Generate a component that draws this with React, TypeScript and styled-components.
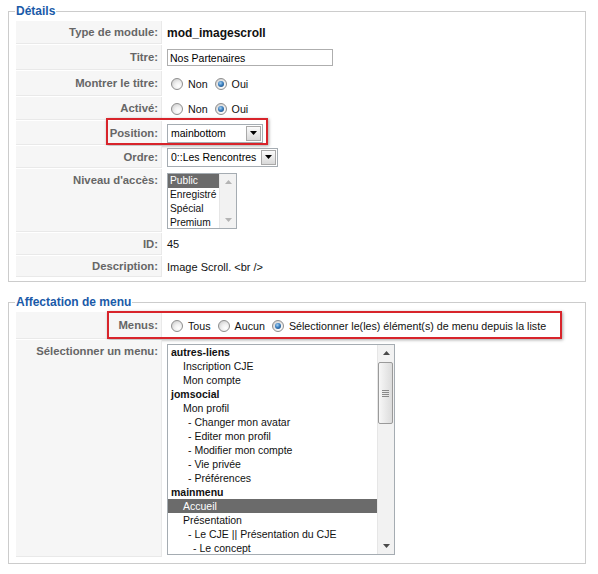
import styled, { createGlobalStyle } from "styled-components"

const GlobalStyle = createGlobalStyle`
  body {
    margin: 0;
    background: #fff;
    font-family: "Liberation Sans", Arial, sans-serif;
    color: #000;
  }
`

const menuItems: { label: string; indent: number; group?: boolean; selected?: boolean }[] = [
    { label: "autres-liens", indent: 3, group: true },
    { label: "Inscription CJE", indent: 15 },
    { label: "Mon compte", indent: 15 },
    { label: "jomsocial", indent: 3, group: true },
    { label: "Mon profil", indent: 15 },
    { label: "- Changer mon avatar", indent: 20 },
    { label: "- Editer mon profil", indent: 20 },
    { label: "- Modifier mon compte", indent: 20 },
    { label: "- Vie privée", indent: 20 },
    { label: "- Préférences", indent: 20 },
    { label: "mainmenu", indent: 3, group: true },
    { label: "Accueil", indent: 15, selected: true },
    { label: "Présentation", indent: 15 },
    { label: "- Le CJE || Présentation du CJE", indent: 20 },
    { label: "- Le concept", indent: 25 },
]

const accessLevels = ["Public", "Enregistré", "Spécial", "Premium"]

const Arrow = ({ up, color = "#000" }: { up?: boolean; color?: string }) => (
    <svg width="7" height="4" viewBox="0 0 7 4">
        <polygon points={up ? "0,4 7,4 3.5,0" : "0,0 7,0 3.5,4"} fill={color} />
    </svg>
)

const App = () => {
    return (
        <Page>
            <GlobalStyle />
            <Fieldset $bottom={3}>
                <Legend>Détails</Legend>
                <AdminTable>
                    <tbody>
                        <tr>
                            <KeyCell $h={23}>Type de module:</KeyCell>
                            <ValueCell><Strong>mod_imagescroll</Strong></ValueCell>
                        </tr>
                        <tr>
                            <KeyCell $h={25}>Titre:</KeyCell>
                            <ValueCell><TextInput readOnly defaultValue="Nos Partenaires" /></ValueCell>
                        </tr>
                        <tr>
                            <KeyCell $h={25}>Montrer le titre:</KeyCell>
                            <ValueCell>
                                <RadioGroup>
                                    <Radio /><RadioLabel>Non</RadioLabel>
                                    <Radio $checked /><RadioLabel>Oui</RadioLabel>
                                </RadioGroup>
                            </ValueCell>
                        </tr>
                        <tr>
                            <KeyCell $h={23}>Activé:</KeyCell>
                            <ValueCell>
                                <RadioGroup>
                                    <Radio /><RadioLabel>Non</RadioLabel>
                                    <Radio $checked /><RadioLabel>Oui</RadioLabel>
                                </RadioGroup>
                            </ValueCell>
                        </tr>
                        <tr>
                            <KeyCell $h={24}>
                                <Highlight $left={90} $top={-3} $w={162} $h={27} />
                                Position:
                            </KeyCell>
                            <ValueCell>
                                <Select $w={96}>
                                    <SelectText>mainbottom</SelectText>
                                    <DropButton><Arrow /></DropButton>
                                </Select>
                            </ValueCell>
                        </tr>
                        <tr>
                            <KeyCell $h={22}>Ordre:</KeyCell>
                            <ValueCell>
                                <Select $w={111}>
                                    <SelectText>0::Les Rencontres</SelectText>
                                    <DropButton><Arrow /></DropButton>
                                </Select>
                            </ValueCell>
                        </tr>
                        <tr>
                            <KeyCell $h={63} $top>Niveau d'accès:</KeyCell>
                            <ValueCell $top>
                                <ListBox $w={70} $h={56}>
                                    <ListItems>
                                        {accessLevels.map((level, i) => (
                                            <ListItem key={level} $indent={2} $small $selected={i === 0}>{level}</ListItem>
                                        ))}
                                    </ListItems>
                                    <ScrollBar $w={16}>
                                        <ScrollButton><Arrow up color="#b4b4b4" /></ScrollButton>
                                        <ScrollTrack />
                                        <ScrollButton><Arrow color="#b4b4b4" /></ScrollButton>
                                    </ScrollBar>
                                </ListBox>
                            </ValueCell>
                        </tr>
                        <tr>
                            <KeyCell $h={22}>ID:</KeyCell>
                            <ValueCell>45</ValueCell>
                        </tr>
                        <tr>
                            <KeyCell $h={21}>Description:</KeyCell>
                            <ValueCell>Image Scroll. &lt;br /&gt;</ValueCell>
                        </tr>
                    </tbody>
                </AdminTable>
            </Fieldset>

            <Fieldset $gap={12} $bottom={5}>
                <Legend>Affectation de menu</Legend>
                <AdminTable>
                    <tbody>
                        <tr>
                            <KeyCell $h={27}>
                                <Highlight $left={91} $top={-1} $w={455} $h={28} />
                                Menus:
                            </KeyCell>
                            <ValueCell>
                                <RadioGroup>
                                    <Radio /><RadioLabel>Tous</RadioLabel>
                                    <Radio /><RadioLabel>Aucun</RadioLabel>
                                    <Radio $checked /><RadioLabel>Sélectionner le(les) élément(s) de menu depuis la liste</RadioLabel>
                                </RadioGroup>
                            </ValueCell>
                        </tr>
                        <tr>
                            <KeyCell $h={217} $top>Sélectionner un menu:</KeyCell>
                            <ValueCell $top>
                                <ListBox $w={228} $h={211}>
                                    <ListItems>
                                        {menuItems.map(item => (
                                            <ListItem
                                                key={item.label}
                                                $indent={item.indent}
                                                $group={item.group}
                                                $selected={item.selected}
                                            >
                                                {item.label}
                                            </ListItem>
                                        ))}
                                    </ListItems>
                                    <ScrollBar $w={16}>
                                        <ScrollButton><Arrow up color="#4a4a4a" /></ScrollButton>
                                        <Thumb>
                                            <Grip><i /><i /><i /><i /></Grip>
                                        </Thumb>
                                        <ScrollTrack />
                                        <ScrollButton><Arrow color="#4a4a4a" /></ScrollButton>
                                    </ScrollBar>
                                </ListBox>
                            </ValueCell>
                        </tr>
                    </tbody>
                </AdminTable>
            </Fieldset>
        </Page>
    )
}

const Page = styled.div`
  width: 598px;
  padding-top: 3px;
`;

const Fieldset = styled.fieldset<{ $gap?: number; $bottom: number }>`
  margin: ${p => p.$gap ?? 0}px 12px 0 8px;
  padding: 1px 5px ${p => p.$bottom}px 6px;
  border: 1px solid #cccccc;
  min-width: 0;
`;

const Legend = styled.legend`
  color: #1a5aa8;
  font-size: 12px;
  font-weight: bold;
  line-height: 16px;
  padding: 0 1px;
`;

const AdminTable = styled.table`
  width: 100%;
  border-collapse: separate;
  border-spacing: 1px;
`;

const KeyCell = styled.td<{ $h: number; $top?: boolean }>`
  position: relative;
  box-sizing: border-box;
  width: 146px;
  height: ${p => p.$h}px;
  padding: ${p => (p.$top ? "5px" : "0")} 3px 0 0;
  background: #f6f6f6;
  border-bottom: 1px solid #e9e9e9;
  border-right: 1px solid #e9e9e9;
  text-align: right;
  vertical-align: ${p => (p.$top ? "top" : "middle")};
  color: #666666;
  font-weight: bold;
  font-size: 11.3px;
  white-space: nowrap;
`;

const ValueCell = styled.td<{ $top?: boolean }>`
  padding: ${p => (p.$top ? "4px" : "0")} 0 0 4px;
  vertical-align: ${p => (p.$top ? "top" : "middle")};
  font-size: 11px;
  color: #111;
`;

const Strong = styled.span`
  font-weight: bold;
  font-size: 12px;
  color: #111;
`;

const Highlight = styled.span<{ $left: number; $top: number; $w: number; $h: number }>`
  position: absolute;
  left: ${p => p.$left}px;
  top: ${p => p.$top}px;
  width: ${p => p.$w}px;
  height: ${p => p.$h}px;
  box-sizing: border-box;
  border: 2px solid #d8242b;
  box-shadow: 1px 1px 3px rgba(0, 0, 0, 0.35);
  pointer-events: none;
`;

const TextInput = styled.input`
  display: block;
  box-sizing: border-box;
  width: 166px;
  height: 17px;
  margin: 0;
  padding: 0 2px;
  border: 1px solid #aeaeae;
  font-family: "Liberation Sans", Arial, sans-serif;
  font-size: 10.5px;
  color: #000;
  outline: none;
`;

const RadioGroup = styled.div`
  display: flex;
  align-items: center;
  padding-left: 4px;
`;

const Radio = styled.span<{ $checked?: boolean }>`
  position: relative;
  box-sizing: border-box;
  width: 12px;
  height: 12px;
  border-radius: 50%;
  border: 1px solid #8e8e8e;
  background: radial-gradient(circle at 65% 70%, #ffffff 0%, #f0f0f0 40%, #c4c4c4 100%);
  flex-shrink: 0;
  &::after {
    content: "";
    display: ${p => (p.$checked ? "block" : "none")};
    position: absolute;
    inset: 2px;
    border-radius: 50%;
    background: radial-gradient(circle at 40% 35%, #a6d2f2 0%, #3c7fbf 45%, #163f6a 100%);
  }
`;

const RadioLabel = styled.span`
  font-size: 10.7px;
  margin: 0 7px 0 5px;
  color: #111;
`;

const Select = styled.div<{ $w: number }>`
  display: flex;
  align-items: center;
  box-sizing: border-box;
  width: ${p => p.$w}px;
  height: 19px;
  padding: 1px;
  border: 1px solid #a5acb2;
  background: #fff;
`;

const SelectText = styled.span`
  flex: 1;
  padding-left: 2px;
  font-size: 10.5px;
  color: #000;
  white-space: nowrap;
  overflow: hidden;
`;

const DropButton = styled.span`
  display: flex;
  align-items: center;
  justify-content: center;
  box-sizing: border-box;
  width: 15px;
  height: 15px;
  border: 1px solid #a9a9a9;
  background: linear-gradient(#fbfbfb, #d9d9d9);
`;

const ListBox = styled.div<{ $w: number; $h: number }>`
  display: flex;
  box-sizing: border-box;
  width: ${p => p.$w}px;
  height: ${p => p.$h}px;
  border: 1px solid #a5acb2;
  background: #fff;
  overflow: hidden;
`;

const ListItems = styled.div`
  flex: 1;
  min-width: 0;
`;

const ListItem = styled.div<{ $indent: number; $group?: boolean; $selected?: boolean; $small?: boolean }>`
  height: 14px;
  line-height: 14px;
  padding-left: ${p => p.$indent}px;
  font-size: ${p => (p.$small ? "10.2px" : "10.5px")};
  font-weight: ${p => (p.$group ? "bold" : "normal")};
  background: ${p => (p.$selected ? "#6b6b6b" : "transparent")};
  color: ${p => (p.$selected ? "#fff" : "#111")};
  white-space: nowrap;
`;

const ScrollBar = styled.div<{ $w: number }>`
  display: flex;
  flex-direction: column;
  width: ${p => p.$w}px;
  flex-shrink: 0;
  background: #f2f2f2;
  border-left: 1px solid #e6e6e6;
`;

const ScrollButton = styled.div`
  display: flex;
  align-items: center;
  justify-content: center;
  height: 16px;
  flex-shrink: 0;
`;

const ScrollTrack = styled.div`
  flex: 1;
`;

const Thumb = styled.div`
  display: flex;
  align-items: center;
  justify-content: center;
  box-sizing: border-box;
  height: 62px;
  margin: 1px 1px 0 0;
  border: 1px solid #9a9a9a;
  border-radius: 2px;
  background: linear-gradient(to right, #f7f7f7, #dcdcdc);
  flex-shrink: 0;
`;

const Grip = styled.div`
  display: flex;
  flex-direction: column;
  gap: 1px;
  i {
    display: block;
    width: 7px;
    height: 1px;
    background: #8a8a8a;
  }
`;

export default App
